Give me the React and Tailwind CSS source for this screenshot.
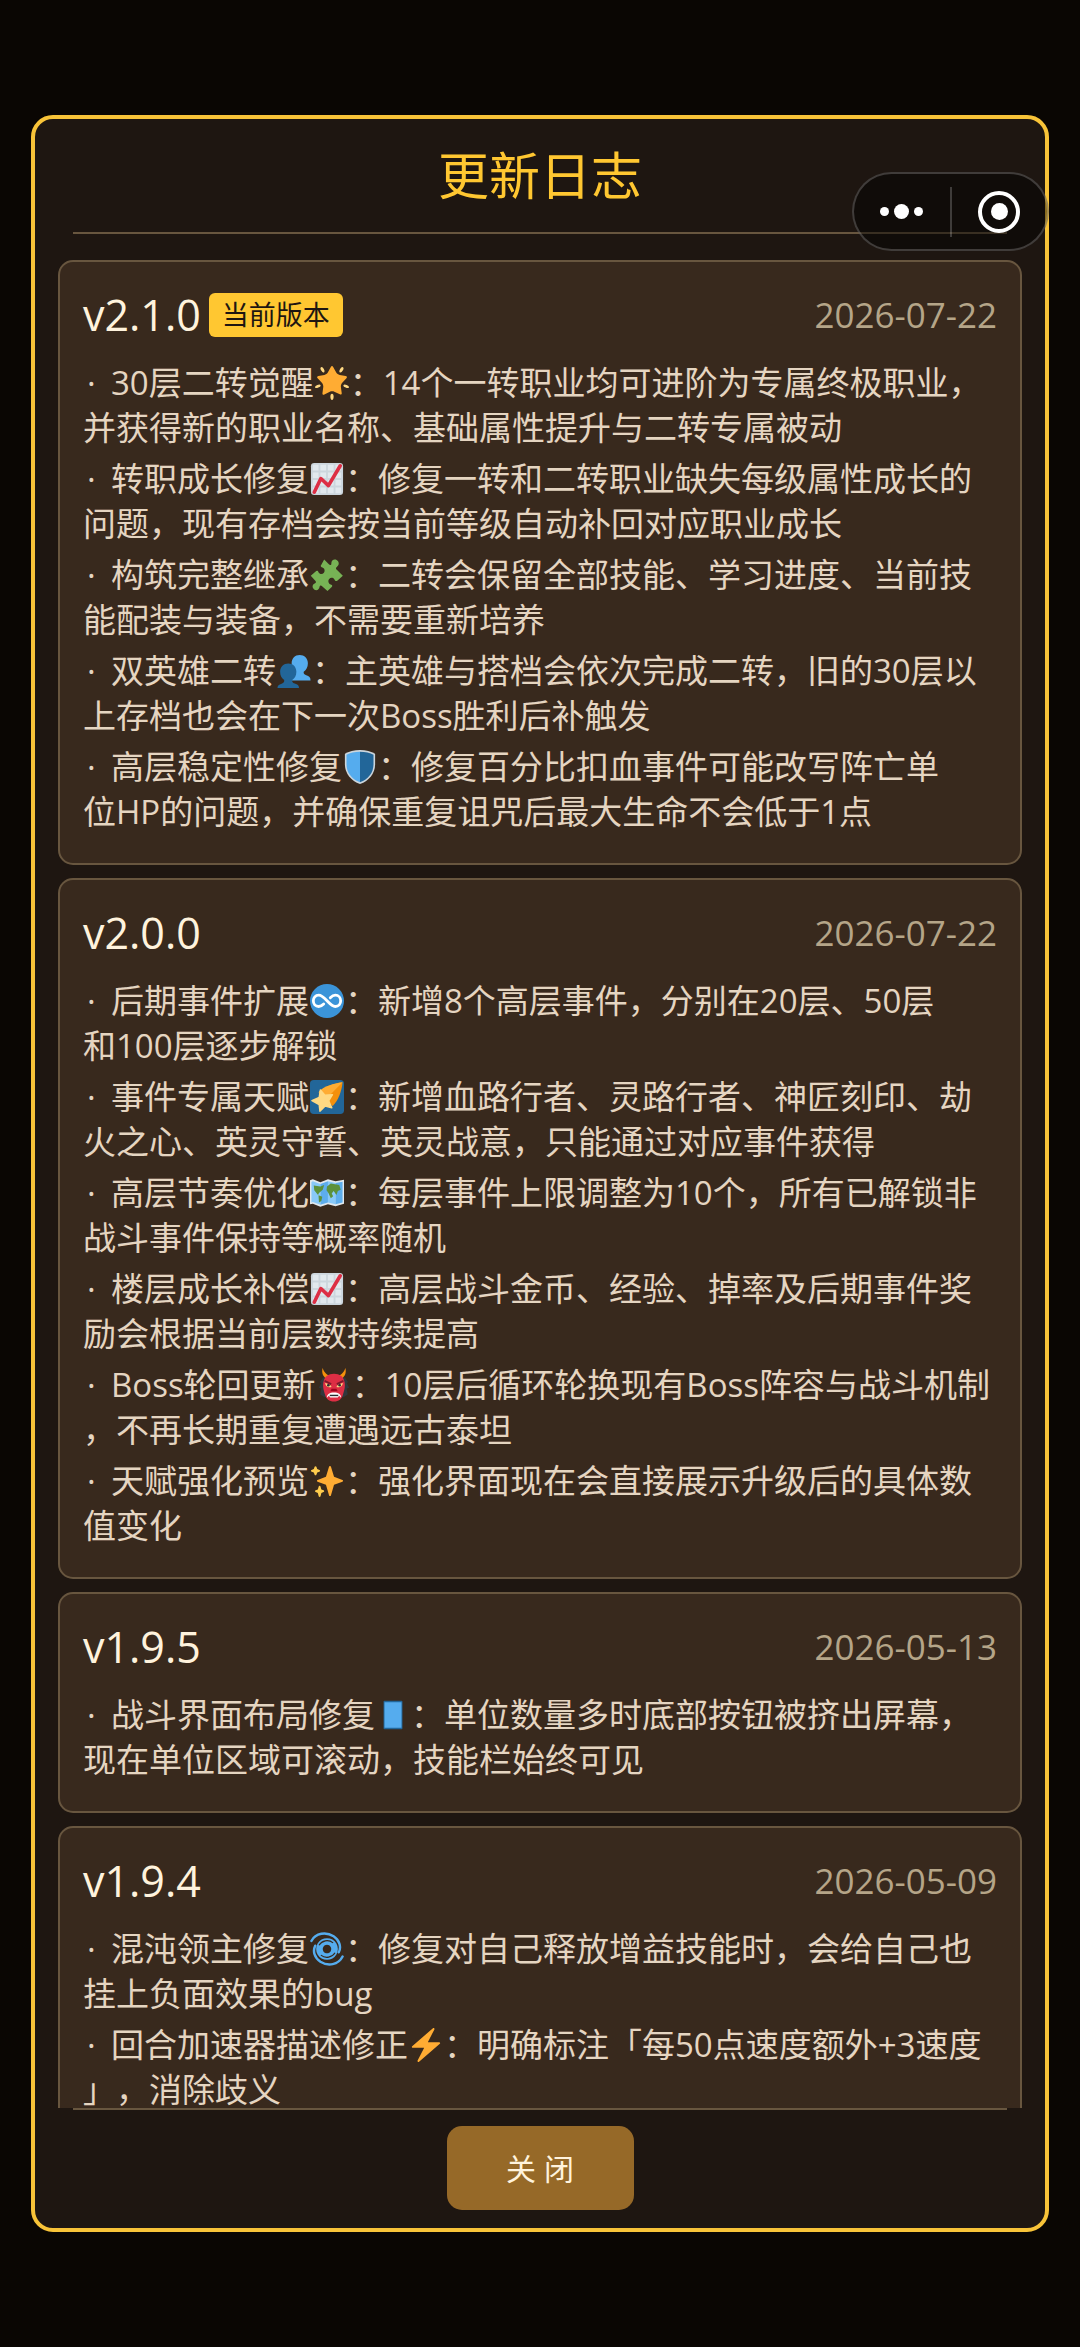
import React from 'react'

const EMOJI = {
    star: (
        <>
            <path fill="#FFAC33" d="M28.84 17.638c-.987 1.044-1.633 3.067-1.438 4.493l.892 6.441c.197 1.427-.701 2.087-1.996 1.469l-5.851-2.796c-1.295-.62-3.408-.611-4.7.018l-5.826 2.842c-1.291.629-2.193-.026-2.007-1.452l.843-6.449c.186-1.427-.475-3.444-1.47-4.481l-4.494-4.688c-.996-1.037-.655-2.102.755-2.365l6.37-1.188c1.41-.263 3.116-1.518 3.793-2.789L16.762.956c.675-1.271 1.789-1.274 2.473-.009L22.33 6.66c.686 1.265 2.4 2.507 3.814 2.758l6.378 1.141c1.412.252 1.761 1.314.774 2.359l-4.456 4.72z" />
            <g fill="#FFD983">
                <ellipse cx="8" cy="4" rx="1.6" ry="3.2" transform="rotate(-30 8 4)" />
                <ellipse cx="28" cy="4" rx="1.6" ry="3.2" transform="rotate(30 28 4)" />
                <ellipse cx="3" cy="21.500" rx="1.500" ry="3.100" transform="rotate(68 3 21.500)" />
                <ellipse cx="33" cy="21.500" rx="1.500" ry="3.100" transform="rotate(-68 33 21.500)" />
                <ellipse cx="18" cy="32.600" rx="1.700" ry="3.300" />
            </g>
        </>
    ),
    chart: (
        <>
            <rect x="1" y="1" width="34" height="34" rx="3.500" fill="#CCD6DD" />
            <g fill="#E1E8ED">
                <path d="M3 3h6v6H3zM11 3h6v6h-6zM19 3h6v6h-6zM27 3h6v6h-6zM3 11h6v6H3zM11 11h6v6h-6zM19 11h6v6h-6zM27 11h6v6h-6zM3 19h6v6H3zM11 19h6v6h-6zM19 19h6v6h-6zM27 19h6v6h-6zM3 27h6v6H3zM11 27h6v6h-6zM19 27h6v6h-6zM27 27h6v6h-6z" />
            </g>
            <path d="M4.500 32l7-14.500 8 7.500L32 4" fill="none" stroke="#DD2E44" strokeWidth="3.800" strokeLinecap="round" strokeLinejoin="round" />
        </>
    ),
    puzzle: (
        <path fill="#77B255" d="M15 1.500l5 5.200c1.200 1.200 2.800.8 2.600-1C22.500 2.500 25.500.7 28.200 2.200c3 1.800 2.800 5.300.6 6.700-1.800 1.200-1.500 2.600-.4 3.600l6.400 6.200-5.600 5c-1.500 1.300-2.600.7-3.200-.8-1-2.300-4.200-2.600-5.700-.7-1.700 2.100-.6 5.200 1.700 5.800 1.800.5 2 1.700 1 2.700L18.500 35l-5.700-5.200c-1.300-1.100-2.500-.5-2.700 1-.4 3-3.400 4.200-5.700 2.500-2.500-1.900-1.900-5.300.5-6.200 1.600-.6 1.800-1.900.7-3L.8 18.700 6 14.200c1.300-1.100 2.400-.5 3 .8 1.100 2.300 4.200 2.500 5.700.6 1.600-2.100.5-4.900-1.700-5.500-1.700-.5-2.200-1.700-1-2.900z" />
    ),
    people: (
        <>
            <path fill="#55ACEE" d="M24 1c-5 0-8.500 3.700-8.500 8.800 0 4.200 1.800 7.200 4.200 9 .3 1.800-.4 3-2.700 4L13 25v3h22.500c0-3.500-1.500-4.600-4.500-5.500-2.600-.8-3-2-2.700-3.700 2.700-1.800 4.400-4.900 4.400-9C32.700 4.700 29 1 24 1z" />
            <path fill="#226699" d="M12 10c-5 0-8.700 3.700-8.700 8.800 0 4 1.700 7 4.300 8.800.3 1.800-.4 3-2.700 3.800C2 32.200.5 33.300.5 36h22.800c0-2.700-1.500-3.800-4.500-4.700-2.400-.7-3-2-2.700-3.700 2.700-1.800 4.400-4.800 4.400-8.800 0-5.100-3.500-8.800-8.500-8.800z" />
        </>
    ),
    shield: (
        <>
            <path fill="#CCD6DD" d="M18 0C12 0 6 1.500 2 4v11c0 10 6.500 17.500 16 21 9.500-3.500 16-11 16-21V4c-4-2.500-10-4-16-4z" />
            <path fill="#55ACEE" d="M18 1.800C12.500 1.800 7.200 3 3.700 5v10c0 9 5.600 15.800 14.300 19.200z" />
            <path fill="#226699" d="M18 1.800c5.500 0 10.800 1.200 14.300 3.200v10c0 9-5.600 15.800-14.300 19.200z" />
        </>
    ),
    infinity: (
        <>
            <circle cx="18" cy="18" r="18" fill="#3B94D9" />
            <path d="M21.500 14.500c2-2 3.500-2.700 5.300-2.700 3.400 0 5.700 2.800 5.700 6s-2.300 6-5.700 6c-3.200 0-5.300-2.300-8.800-6s-5.600-6-8.800-6c-3.400 0-5.700 2.800-5.700 6s2.300 6 5.700 6c1.800 0 3.300-.7 5.300-2.700" fill="none" stroke="#fff" strokeWidth="3" strokeLinecap="round" />
        </>
    ),
    shooting: (
        <>
            <rect width="36" height="36" rx="4" fill="#226699" />
            <path fill="#F4900C" d="M34.500 2.500C24 4 14 7.500 9 13.500l15 14C30 22 33.500 12 34.500 2.500z" />
            <path fill="#FFAC33" d="M34.500 2.500C25 4 14.500 6.500 9.500 12.500l9 6z" />
            <path fill="#FFD983" d="M11 10.500l4.800 5.500 8-.5-4 6.500 3.300 7.500-7-2L10.500 33l-.8-7L2 21.800l7.700-3.300z" stroke="#FFD983" strokeWidth="1.500" strokeLinejoin="round" />
        </>
    ),
    map: (
        <>
            <path fill="#E1E8ED" d="M0 4.500l3-1 8 3 8-3 8 2 9-1.500v25.500l-9 2.500-8-2-8 2.500-8-3-3 .5z" />
            <path fill="#88C9F9" d="M1.500 6.300L3 5.500l8 3v22l-8-3-1.500.5zM19 5.500l8 2V30l-8-2z" />
            <path fill="#5DADEC" d="M11 8.500l8-3V28l-8 2.500zM27 7.500l7.500-1.500v22L27 30z" />
            <path fill="#5C913B" d="M4 10l7 1 4-1.500-1.500 5-4 3.500-1 2-4-5zM9 20.500l4 1.500-1 4.500-2.500 1.500zM18 11l4-3 9 1.500 1.500 5-3 1.500-1.500 4-3-4-2 2.500 1.500 3-2.500 2-2.500-5.500-2-3z" />
        </>
    ),
    ogre: (
        <>
            <path fill="#31373D" d="M6.500 10L3 15l1.500 1L2 21l2.500.8L3.500 28l4.500 3h20l4.500-3-1-6.200L34 21l-2.500-5 1.500-1-3.500-5z" />
            <path fill="#F4900C" d="M6 0c-1.500 5 .5 10.500 6 12l4-3.500C11 8.500 7.500 5 6 0zM30 0c1.500 5-.5 10.500-6 12l-4-3.500C25 8.500 28.500 5 30 0z" />
            <path fill="#DD2E44" d="M18 6c-6 0-10 3-11 8-1.500 6 .5 10.500 1.500 14 1 4.500 4.500 7.500 9.500 7.500s8.500-3 9.500-7.500c1-3.500 3-8 1.500-14-1-5-5-8-11-8z" />
            <path fill="#FFD983" d="M8.500 16c3 .5 5.500 1.500 7 4-3 1-6 .5-7-4zM27.500 16c-3 .5-5.500 1.500-7 4 3 1 6 .5 7-4z" />
            <circle cx="12" cy="18.300" r="1.400" fill="#292F33" />
            <circle cx="24" cy="18.300" r="1.400" fill="#292F33" />
            <path d="M8 13.500l7 3.500M28 13.500L21 17" stroke="#7C1A2B" strokeWidth="2" />
            <path fill="#A0041E" d="M15.500 22h5l1.500 2.500h-8z" />
            <path fill="#fff" d="M10.500 31.500c0-4 3-5.500 7.500-5.500s7.500 1.500 7.500 5.500l-2-2-1.500 1.700h-8l-1.500-1.700z" />
            <path fill="#292F33" d="M13.500 28.300h9v1.500h-9z" />
        </>
    ),
    sparkles: (
        <>
            <path fill="#FFAC33" d="M34.347 16.893l-8.899-3.294-3.323-10.891c-.128-.42-.517-.708-.956-.708-.439 0-.828.288-.956.708l-3.322 10.891-8.9 3.294c-.393.146-.653.519-.653.938 0 .418.26.793.653.938l8.895 3.293 3.324 11.223c.126.424.516.715.959.715.442 0 .833-.291.959-.716l3.324-11.223 8.896-3.293c.391-.144.652-.518.652-.937 0-.418-.261-.792-.653-.938z" />
            <path fill="#FFCC4D" d="M14.347 27.894l-2.314-.856-.9-3.3c-.118-.436-.513-.738-.964-.738-.451 0-.846.302-.965.737l-.9 3.3-2.313.856c-.393.146-.653.52-.653.938 0 .418.26.793.653.938l2.301.853.907 3.622c.112.444.511.756.97.756.459 0 .858-.312.97-.757l.907-3.622 2.301-.853c.393-.144.653-.519.653-.937 0-.418-.26-.793-.653-.937zM10.009 6.231l-2.364-.875-.876-2.365c-.145-.393-.519-.653-.938-.653-.418 0-.792.26-.938.653l-.875 2.365-2.365.875c-.393.146-.653.52-.653.938 0 .418.26.793.653.938l2.365.875.875 2.365c.146.393.52.653.938.653.418 0 .792-.26.938-.653l.875-2.365 2.365-.875c.393-.146.653-.52.653-.938 0-.418-.26-.792-.653-.938z" />
        </>
    ),
    phone: (
        <>
            <rect x="8" y="3" width="20" height="30" rx="1" fill="#226699" />
            <rect x="9" y="4.500" width="18" height="27" fill="#55ACEE" />
        </>
    ),
    cyclone: (
        <>
            <path fill="#55ACEE" fillRule="evenodd" d="M18 6.500a11.500 11.500 0 1 0 .01 0zM18 13.500a4.500 4.500 0 1 1-.01 0z" />
            <path d="M1.500 9.500C6 1 17 -.5 25 4.500c6 4 8.500 11 5.500 17" fill="none" stroke="#55ACEE" strokeWidth="2.600" strokeLinecap="round" />
            <path d="M34.500 26C30 35 19 36.500 11 31.500 5 27.500 2.500 20.500 5.500 14.500" fill="none" stroke="#55ACEE" strokeWidth="2.600" strokeLinecap="round" />
            <path d="M9.500 14c3-5 10-6.500 15-2.500M26.500 22c-3 5-10 6.500-15 2.500" fill="none" stroke="#38291D" strokeWidth="1.200" />
        </>
    ),
    bolt: (
        <path fill="#FFAC33" d="M32.938 15.651C32.792 15.26 32.418 15 32 15H19.925L26.89 1.458c.219-.426.106-.947-.271-1.243C26.437.071 26.218 0 26 0c-.233 0-.466.082-.653.243L18 6.588 3.347 19.243c-.316.273-.43.714-.284 1.105S3.582 21 4 21h12.075L9.11 34.542c-.219.426-.106.947.271 1.243.182.144.401.215.619.215.233 0 .466-.082.653-.243L18 29.412l14.653-12.655c.317-.273.43-.714.285-1.106z" />
    ),
}

const versions = [
    {
        version: 'v2.1.0',
        date: '2026-07-22',
        current: true,
        items: [
            { title: '30层二转觉醒', icon: 'star', text: '：14个一转职业均可进阶为专属终极职业，', rest: '并获得新的职业名称、基础属性提升与二转专属被动' },
            { title: '转职成长修复', icon: 'chart', text: '：修复一转和二转职业缺失每级属性成长的', rest: '问题，现有存档会按当前等级自动补回对应职业成长' },
            { title: '构筑完整继承', icon: 'puzzle', text: '：二转会保留全部技能、学习进度、当前技', rest: '能配装与装备，不需要重新培养' },
            { title: '双英雄二转', icon: 'people', text: '：主英雄与搭档会依次完成二转，旧的30层以', rest: '上存档也会在下一次Boss胜利后补触发' },
            { title: '高层稳定性修复', icon: 'shield', text: '：修复百分比扣血事件可能改写阵亡单', rest: '位HP的问题，并确保重复诅咒后最大生命不会低于1点' },
        ],
    },
    {
        version: 'v2.0.0',
        date: '2026-07-22',
        items: [
            { title: '后期事件扩展', icon: 'infinity', text: '：新增8个高层事件，分别在20层、50层', rest: '和100层逐步解锁' },
            { title: '事件专属天赋', icon: 'shooting', text: '：新增血路行者、灵路行者、神匠刻印、劫', rest: '火之心、英灵守誓、英灵战意，只能通过对应事件获得' },
            { title: '高层节奏优化', icon: 'map', text: '：每层事件上限调整为10个，所有已解锁非', rest: '战斗事件保持等概率随机' },
            { title: '楼层成长补偿', icon: 'chart', text: '：高层战斗金币、经验、掉率及后期事件奖', rest: '励会根据当前层数持续提高' },
            { title: 'Boss轮回更新', icon: 'ogre', text: '：10层后循环轮换现有Boss阵容与战斗机制', rest: '，不再长期重复遭遇远古泰坦' },
            { title: '天赋强化预览', icon: 'sparkles', text: '：强化界面现在会直接展示升级后的具体数', rest: '值变化' },
        ],
    },
    {
        version: 'v1.9.5',
        date: '2026-05-13',
        items: [
            { title: '战斗界面布局修复', icon: 'phone', text: '：单位数量多时底部按钮被挤出屏幕，', rest: '现在单位区域可滚动，技能栏始终可见' },
        ],
    },
    {
        version: 'v1.9.4',
        date: '2026-05-09',
        items: [
            { title: '混沌领主修复', icon: 'cyclone', text: '：修复对自己释放增益技能时，会给自己也', rest: '挂上负面效果的bug' },
            { title: '回合加速器描述修正', icon: 'bolt', text: '：明确标注「每50点速度额外+3速度', rest: '」，消除歧义' },
        ],
    },
]

function Emoji({ name }) {
    return (
        <svg viewBox="0 0 36 36" className="mx-px inline-block size-[34px] align-[-5px]" aria-hidden="true">
            {EMOJI[name]}
        </svg>
    )
}

function VersionCard({ version, date, current, items }) {
    return (
        <article className="shrink-0 rounded-[15px] border-2 border-[#68563f] bg-[#38291d] px-[23px] pt-[31px] pb-[29px]">
            <header className="flex h-11 items-center justify-between mb-[23px]">
                <div className="flex items-center gap-2">
                    <h2 className="text-[43px] leading-[44px] text-[#fff3dd]">{version}</h2>
                    {current && (
                        <span className="rounded-md bg-[#ffc731] px-[13px] text-[27px] leading-[44px] text-[#1e1611]">当前版本</span>
                    )}
                </div>
                <time className="text-[35px] leading-[44px] text-[#b5a588]">{date}</time>
            </header>
            <ul className="flex flex-col gap-1.5 text-[33px] leading-[45px] text-[#e5d5c1] whitespace-nowrap">
                {items.map((item) => (
                    <li key={item.title}>
                        <span className="inline-block w-7 pl-1">·</span>
                        {item.title}
                        <Emoji name={item.icon} />
                        {item.text}
                        <br />
                        {item.rest}
                    </li>
                ))}
            </ul>
        </article>
    )
}

// mini program menu that floats above the page
function Capsule() {
    return (
        <div className="absolute right-[31px] top-[172px] flex h-[79px] w-[197px] items-center rounded-full border-2 border-white/20 bg-black/45">
            <button aria-label="更多" className="flex flex-1 items-center justify-center gap-[5px]">
                <span className="size-[9px] rounded-full bg-white"></span>
                <span className="size-[15px] rounded-full bg-white"></span>
                <span className="size-[9px] rounded-full bg-white"></span>
            </button>
            <span className="h-[50px] w-0.5 bg-white/20"></span>
            <button aria-label="退出" className="flex flex-1 items-center justify-center">
                <span className="flex size-[42px] items-center justify-center rounded-full border-4 border-white">
                    <span className="size-[17px] rounded-full bg-white"></span>
                </span>
            </button>
        </div>
    )
}

function App() {
    return (
        <div className="relative flex h-screen flex-col bg-[#0a0603] px-[31px] py-[115px] font-['Open_Sans','Noto_Sans_CJK_SC',sans-serif] [text-spacing-trim:space-all]">
            <main className="flex min-h-0 flex-1 flex-col rounded-[22px] border-4 border-[#f8c338] bg-[#1e1611]">
                <h1 className="mx-[38px] border-b-2 border-[#68563f] text-center text-[51px] leading-[113px] text-[#ffc731]">更新日志</h1>

                <section className="mt-[26px] flex min-h-0 flex-1 flex-col gap-[13px] overflow-y-auto px-[23px] [scrollbar-width:none]">
                    {versions.map((v) => (
                        <VersionCard key={v.version} {...v} />
                    ))}
                </section>

                <footer className="mx-[38px] flex justify-center border-t-2 border-[#68563f] pt-4 pb-[18px]">
                    <button className="h-[84px] w-[187px] rounded-[15px] bg-[#966928] text-[30px] text-[#fff3dd]">关 闭</button>
                </footer>
            </main>
            <Capsule />
        </div>
    )
}

export default App
